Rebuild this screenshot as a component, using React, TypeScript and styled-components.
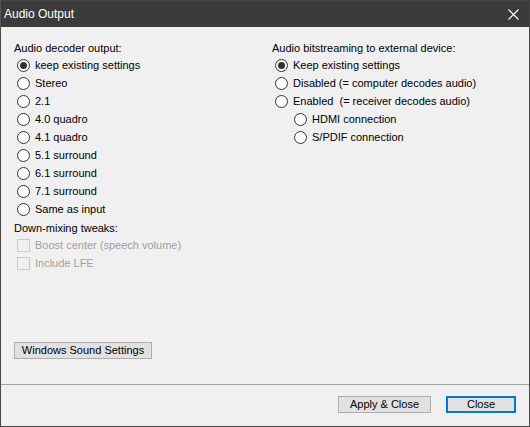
import { FC } from 'react'
import styled, { createGlobalStyle } from 'styled-components'

const GlobalStyle = createGlobalStyle`
  html, body {
    margin: 0;
    padding: 0;
    background: #f0f0f0;
  }
  * {
    box-sizing: border-box;
  }
`

const Window = styled.div`
  width: 530px;
  height: 427px;
  display: flex;
  flex-direction: column;
  border: 1px solid #4a4a4a;
  border-top: none;
  background: #f0f0f0;
  font-family: 'Liberation Sans', Arial, sans-serif;
  font-size: 11px;
  color: #000;
`

const TitleBar = styled.div`
  height: 27px;
  display: flex;
  align-items: center;
  justify-content: space-between;
  background: #3b3b3b;
  color: #fff;
  font-size: 12px;
  padding: 0 10px 0 3px;
  margin: 0 -1px;
  border-left: 1px solid #555;
  border-right: 1px solid #444;
  border-top: 1px solid #444;
`

const CloseIcon = styled.svg`
  width: 11px;
  height: 11px;
  margin-top: 1px;
`

const Body = styled.div`
  flex: 1;
  display: flex;
  flex-direction: column;
  padding: 13px 13px 25px 13px;
`

const Columns = styled.div`
  display: grid;
  grid-template-columns: 258px 1fr;
`

const Column = styled.div`
  display: flex;
  flex-direction: column;
`

const GroupLabel = styled.div<{ $top?: number }>`
  height: 16px;
  line-height: 16px;
  margin-top: ${p => p.$top ?? 0}px;
`

const Row = styled.label<{ $indent?: number; $disabled?: boolean }>`
  height: 18px;
  display: flex;
  align-items: center;
  gap: 5px;
  padding-left: ${p => 3 + (p.$indent ?? 0)}px;
  color: ${p => (p.$disabled ? '#a0a0a0' : '#000')};
  white-space: pre;
`

const Radio = styled.span<{ $checked?: boolean }>`
  width: 13px;
  height: 13px;
  border-radius: 50%;
  border: 1px solid #333;
  background: #fff;
  display: flex;
  align-items: center;
  justify-content: center;
  &::after {
    content: '';
    width: 7px;
    height: 7px;
    border-radius: 50%;
    background: #333;
    display: ${p => (p.$checked ? 'block' : 'none')};
  }
`

const Check = styled.span`
  width: 13px;
  height: 13px;
  border: 1px solid #cccccc;
  background: #f0f0f0;
`

const Spacer = styled.div`
  flex: 1;
`

const Button = styled.button<{ $primary?: boolean; $w: number }>`
  width: ${p => p.$w}px;
  height: 17px;
  padding: 0;
  font-family: inherit;
  font-size: 11px;
  color: #000;
  background: #e1e1e1;
  border: ${p => (p.$primary ? '2px solid #0078d7' : '1px solid #adadad')};
  line-height: 1;
`

const Footer = styled.div`
  height: 42px;
  border-top: 1px solid #a0a0a0;
  display: flex;
  justify-content: flex-end;
  align-items: flex-start;
  gap: 15px;
  padding: 11px 13px 0 0;
`

const decoderOptions = [
  'keep existing settings',
  'Stereo',
  '2.1',
  '4.0 quadro',
  '4.1 quadro',
  '5.1 surround',
  '6.1 surround',
  '7.1 surround',
  'Same as input',
]

const bitstreamOptions = [
  { text: 'Keep existing settings', indent: 0 },
  { text: 'Disabled (= computer decodes audio)', indent: 0 },
  { text: 'Enabled  (= receiver decodes audio)', indent: 0 },
  { text: 'HDMI connection', indent: 19 },
  { text: 'S/PDIF connection', indent: 19 },
]

const App: FC = () => {
  return (
    <>
      <GlobalStyle />
      <Window>
        <TitleBar>
          <span>Audio Output</span>
          <CloseIcon viewBox="0 0 11 11">
            <path d="M0.5 0.5L10.5 10.5M10.5 0.5L0.5 10.5" stroke="#fff" strokeWidth="1.1" />
          </CloseIcon>
        </TitleBar>
        <Body>
          <Columns>
            <Column>
              <GroupLabel>Audio decoder output:</GroupLabel>
              {decoderOptions.map((o, i) => (
                <Row key={o}>
                  <Radio $checked={i === 0} />
                  {o}
                </Row>
              ))}
              <GroupLabel $top={2}>Down-mixing tweaks:</GroupLabel>
              <Row $disabled>
                <Check />
                Boost center (speech volume)
              </Row>
              <Row $disabled>
                <Check />
                Include LFE
              </Row>
            </Column>
            <Column>
              <GroupLabel>Audio bitstreaming to external device:</GroupLabel>
              {bitstreamOptions.map((o, i) => (
                <Row key={o.text} $indent={o.indent}>
                  <Radio $checked={i === 0} />
                  {o.text}
                </Row>
              ))}
            </Column>
          </Columns>
          <Spacer />
          <div>
            <Button $w={138}>Windows Sound Settings</Button>
          </div>
        </Body>
        <Footer>
          <Button $w={93}>Apply &amp; Close</Button>
          <Button $primary $w={70}>Close</Button>
        </Footer>
      </Window>
    </>
  )
}

export default App
